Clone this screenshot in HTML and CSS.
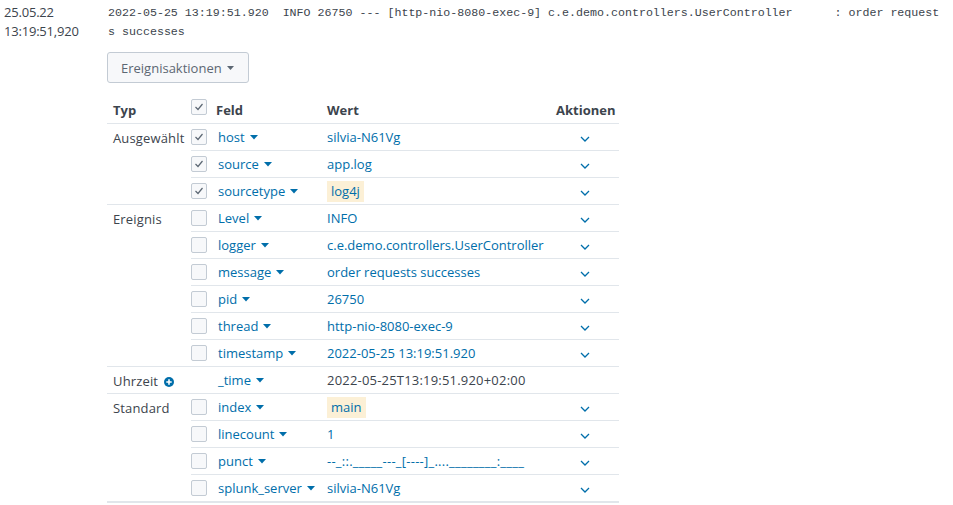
FILE: index.html
```html
<!DOCTYPE html>
<html lang="de">
<head>
<meta charset="utf-8">
<title>Event</title>
<link rel="stylesheet" href="styles.css">
</head>
<body>
<div class="event">
  <div class="time-col">
    <div>25.05.22</div>
    <div>13:19:51,920</div>
  </div>
  <div class="event-col">
    <div class="raw">2022-05-25 13:19:51.920  INFO 26750 --- [http-nio-8080-exec-9] c.e.demo.controllers.UserController      : order requests successes</div>
    <button class="btn">Ereignisaktionen <svg class="btn-caret" width="7" height="4" viewBox="0 0 7 4"><polygon points="0,0 7,0 3.5,4" fill="#5c6773"/></svg></button>
    <table class="fields">
      <colgroup>
        <col class="c-typ"><col class="c-cb"><col class="c-feld"><col class="c-wert"><col class="c-akt">
      </colgroup>
      <thead>
        <tr>
          <th>Typ</th>
          <th class="cb-cell"><span class="cb cb-head"><svg width="14" height="14" viewBox="0 0 14 14"><polyline points="3.5,7 6,9.5 10.5,4" fill="none" stroke="#5c6773" stroke-width="1.2"/></svg></span></th>
          <th>Feld</th>
          <th>Wert</th>
          <th class="akt">Aktionen</th>
        </tr>
      </thead>
      <tbody>
        <tr class="group">
          <td class="typ" rowspan="3">Ausgewählt</td>
          <td class="cb-cell"><span class="cb"><svg width="14" height="14" viewBox="0 0 14 14"><polyline points="3.5,7 6,9.5 10.5,4" fill="none" stroke="#5c6773" stroke-width="1.2"/></svg></span></td>
          <td class="fcell"><span class="field">host<svg class="caret" width="8" height="5" viewBox="0 0 8 5"><polygon points="0,0 8,0 4,4.5"/></svg></span></td>
          <td class="val">silvia-N61Vg</td>
          <td class="chev-cell"><svg class="chev" width="10" height="6" viewBox="0 0 10 6"><polyline points="1,1 5,5 9,1"/></svg></td>
        </tr>
        <tr>
          <td class="cb-cell"><span class="cb"><svg width="14" height="14" viewBox="0 0 14 14"><polyline points="3.5,7 6,9.5 10.5,4" fill="none" stroke="#5c6773" stroke-width="1.2"/></svg></span></td>
          <td class="fcell"><span class="field">source<svg class="caret" width="8" height="5" viewBox="0 0 8 5"><polygon points="0,0 8,0 4,4.5"/></svg></span></td>
          <td class="val">app.log</td>
          <td class="chev-cell"><svg class="chev" width="10" height="6" viewBox="0 0 10 6"><polyline points="1,1 5,5 9,1"/></svg></td>
        </tr>
        <tr>
          <td class="cb-cell"><span class="cb"><svg width="14" height="14" viewBox="0 0 14 14"><polyline points="3.5,7 6,9.5 10.5,4" fill="none" stroke="#5c6773" stroke-width="1.2"/></svg></span></td>
          <td class="fcell"><span class="field">sourcetype<svg class="caret" width="8" height="5" viewBox="0 0 8 5"><polygon points="0,0 8,0 4,4.5"/></svg></span></td>
          <td class="val"><span class="hl">log4j</span></td>
          <td class="chev-cell"><svg class="chev" width="10" height="6" viewBox="0 0 10 6"><polyline points="1,1 5,5 9,1"/></svg></td>
        </tr>

        <tr class="group">
          <td class="typ" rowspan="6">Ereignis</td>
          <td class="cb-cell"><span class="cb"></span></td>
          <td class="fcell"><span class="field">Level<svg class="caret" width="8" height="5" viewBox="0 0 8 5"><polygon points="0,0 8,0 4,4.5"/></svg></span></td>
          <td class="val">INFO</td>
          <td class="chev-cell"><svg class="chev" width="10" height="6" viewBox="0 0 10 6"><polyline points="1,1 5,5 9,1"/></svg></td>
        </tr>
        <tr>
          <td class="cb-cell"><span class="cb"></span></td>
          <td class="fcell"><span class="field">logger<svg class="caret" width="8" height="5" viewBox="0 0 8 5"><polygon points="0,0 8,0 4,4.5"/></svg></span></td>
          <td class="val">c.e.demo.controllers.UserController</td>
          <td class="chev-cell"><svg class="chev" width="10" height="6" viewBox="0 0 10 6"><polyline points="1,1 5,5 9,1"/></svg></td>
        </tr>
        <tr>
          <td class="cb-cell"><span class="cb"></span></td>
          <td class="fcell"><span class="field">message<svg class="caret" width="8" height="5" viewBox="0 0 8 5"><polygon points="0,0 8,0 4,4.5"/></svg></span></td>
          <td class="val">order requests successes</td>
          <td class="chev-cell"><svg class="chev" width="10" height="6" viewBox="0 0 10 6"><polyline points="1,1 5,5 9,1"/></svg></td>
        </tr>
        <tr>
          <td class="cb-cell"><span class="cb"></span></td>
          <td class="fcell"><span class="field">pid<svg class="caret" width="8" height="5" viewBox="0 0 8 5"><polygon points="0,0 8,0 4,4.5"/></svg></span></td>
          <td class="val">26750</td>
          <td class="chev-cell"><svg class="chev" width="10" height="6" viewBox="0 0 10 6"><polyline points="1,1 5,5 9,1"/></svg></td>
        </tr>
        <tr>
          <td class="cb-cell"><span class="cb"></span></td>
          <td class="fcell"><span class="field">thread<svg class="caret" width="8" height="5" viewBox="0 0 8 5"><polygon points="0,0 8,0 4,4.5"/></svg></span></td>
          <td class="val">http-nio-8080-exec-9</td>
          <td class="chev-cell"><svg class="chev" width="10" height="6" viewBox="0 0 10 6"><polyline points="1,1 5,5 9,1"/></svg></td>
        </tr>
        <tr>
          <td class="cb-cell"><span class="cb"></span></td>
          <td class="fcell"><span class="field">timestamp<svg class="caret" width="8" height="5" viewBox="0 0 8 5"><polygon points="0,0 8,0 4,4.5"/></svg></span></td>
          <td class="val">2022-05-25 13:19:51.920</td>
          <td class="chev-cell"><svg class="chev" width="10" height="6" viewBox="0 0 10 6"><polyline points="1,1 5,5 9,1"/></svg></td>
        </tr>

        <tr class="group">
          <td class="typ">Uhrzeit <svg class="plus" width="10" height="10" viewBox="0 0 10 10"><circle cx="5" cy="5" r="5" fill="#006eaa"/><path d="M5 2.3v5.4M2.3 5h5.4" stroke="#fff" stroke-width="1.6"/></svg></td>
          <td class="cb-cell"></td>
          <td class="fcell"><span class="field">_time<svg class="caret" width="8" height="5" viewBox="0 0 8 5"><polygon points="0,0 8,0 4,4.5"/></svg></span></td>
          <td class="plain">2022-05-25T13:19:51.920+02:00</td>
          <td class="chev-cell"></td>
        </tr>

        <tr class="group">
          <td class="typ" rowspan="4">Standard</td>
          <td class="cb-cell"><span class="cb"></span></td>
          <td class="fcell"><span class="field">index<svg class="caret" width="8" height="5" viewBox="0 0 8 5"><polygon points="0,0 8,0 4,4.5"/></svg></span></td>
          <td class="val"><span class="hl">main</span></td>
          <td class="chev-cell"><svg class="chev" width="10" height="6" viewBox="0 0 10 6"><polyline points="1,1 5,5 9,1"/></svg></td>
        </tr>
        <tr>
          <td class="cb-cell"><span class="cb"></span></td>
          <td class="fcell"><span class="field">linecount<svg class="caret" width="8" height="5" viewBox="0 0 8 5"><polygon points="0,0 8,0 4,4.5"/></svg></span></td>
          <td class="val">1</td>
          <td class="chev-cell"><svg class="chev" width="10" height="6" viewBox="0 0 10 6"><polyline points="1,1 5,5 9,1"/></svg></td>
        </tr>
        <tr>
          <td class="cb-cell"><span class="cb"></span></td>
          <td class="fcell"><span class="field">punct<svg class="caret" width="8" height="5" viewBox="0 0 8 5"><polygon points="0,0 8,0 4,4.5"/></svg></span></td>
          <td class="val punct">--_::._____---_[----]_....________:____</td>
          <td class="chev-cell"><svg class="chev" width="10" height="6" viewBox="0 0 10 6"><polyline points="1,1 5,5 9,1"/></svg></td>
        </tr>
        <tr>
          <td class="cb-cell"><span class="cb"></span></td>
          <td class="fcell"><span class="field">splunk_server<svg class="caret" width="8" height="5" viewBox="0 0 8 5"><polygon points="0,0 8,0 4,4.5"/></svg></span></td>
          <td class="val">silvia-N61Vg</td>
          <td class="chev-cell"><svg class="chev" width="10" height="6" viewBox="0 0 10 6"><polyline points="1,1 5,5 9,1"/></svg></td>
        </tr>
      </tbody>
    </table>
  </div>
</div>
</body>
</html>
```

FILE: styles.css
```css
html, body {
  margin: 0;
  padding: 0;
  background: #fff;
}
body {
  font-family: "Open Sans", "Liberation Sans", sans-serif;
  font-size: 13px;
  color: #3c444d;
}
.event {
  display: flex;
}
.time-col {
  width: 103px;
  padding-left: 4px;
  padding-top: 3px;
  line-height: 19px;
  color: #3c444d;
  letter-spacing: -0.2px;
}
.event-col {
  width: 838px;
}
.raw {
  font-family: "Liberation Mono", monospace;
  font-size: 11.65px;
  line-height: 19px;
  padding: 3px 0 0 1px;
  white-space: pre-wrap;
  word-break: break-all;
  color: #3c444d;
}
.btn {
  display: inline-flex;
  align-items: center;
  gap: 5px;
  margin-top: 11px;
  height: 31px;
  width: 142px;
  padding: 0 0 0 13px;
  border: 1px solid #c3cbd4;
  border-radius: 3px;
  background: #f7f8fa;
  font-family: "Open Sans", "Liberation Sans", sans-serif;
  font-size: 13px;
  color: #5c6773;
}
.btn-caret {
  display: block;
}
.fields {
  margin-top: 11px;
  width: 512px;
  table-layout: fixed;
  border-collapse: collapse;
  border-bottom: 2px solid #e1e6eb;
}
.c-typ { width: 84px; }
.c-cb { width: 19px; }
.c-feld { width: 111px; }
.c-wert { width: 229px; }
.c-akt { width: 69px; }
.fields th {
  height: 27px;
  padding: 0 0 0 6px;
  text-align: left;
  font-weight: 700;
  color: #3c444d;
  vertical-align: middle;
  padding-top: 2px;
  border-bottom: 1px solid #e1e6eb;
}
.fields th.akt {
  text-align: right;
  padding-right: 6px;
}
.fields td {
  height: 26px;
  padding: 0 0 0 6px;
  vertical-align: middle;
  white-space: nowrap;
  border-bottom: 1px solid #e1e6eb;
}
.fields td.fcell {
  padding-left: 8px;
}
.fields td.typ {
  vertical-align: top;
  padding-top: 5px;
  height: auto;
  letter-spacing: 0.15px;
}
.fields td.cb-cell,
.fields th.cb-cell {
  padding: 0;
}
.cb {
  display: block;
  width: 14px;
  height: 14px;
  border: 1px solid #c3cbd4;
  border-radius: 2px;
  background: #f7f8fa;
}
.cb svg {
  display: block;
}
.cb-head {
  margin-top: -4px;
}
.field {
  color: #006eaa;
  display: inline-flex;
  align-items: center;
  gap: 5px;
}
.caret {
  fill: #006eaa;
  display: block;
}
.val {
  color: #006eaa;
}
.plain {
  color: #3c444d;
  letter-spacing: 0.2px;
}
.punct {
  letter-spacing: 0.25px;
}
.hl {
  display: inline-block;
  background: #fcf0d6;
  padding: 3px 4px;
  line-height: 15px;
}
.chev-cell {
  text-align: center;
}
.fields td.chev-cell {
  padding: 0;
}
.chev {
  fill: none;
  stroke: #006eaa;
  stroke-width: 1.3;
  vertical-align: middle;
}
.plus {
  vertical-align: -1px;
  margin-left: 2px;
}
```
